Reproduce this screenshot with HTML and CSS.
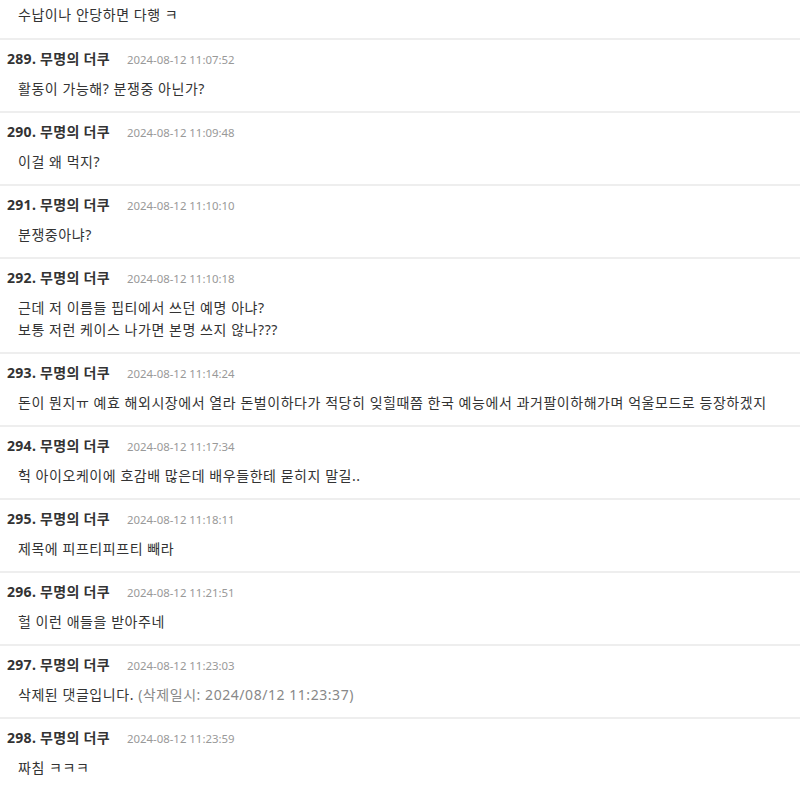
FILE: index.html
```html
<!DOCTYPE html>
<html lang="ko">
<head>
<meta charset="utf-8">
<link rel="stylesheet" href="styles.css">
</head>
<body>
<ul class="comments">
  <li class="comment first">
    <div class="body">수납이나 안당하면 다행 ㅋ</div>
  </li>
  <li class="comment">
    <div class="head"><span class="who">289. 무명의 더쿠</span><span class="date">2024-08-12 11:07:52</span></div>
    <div class="body">활동이 가능해? 분쟁중 아닌가?</div>
  </li>
  <li class="comment">
    <div class="head"><span class="who">290. 무명의 더쿠</span><span class="date">2024-08-12 11:09:48</span></div>
    <div class="body">이걸 왜 먹지?</div>
  </li>
  <li class="comment">
    <div class="head"><span class="who">291. 무명의 더쿠</span><span class="date">2024-08-12 11:10:10</span></div>
    <div class="body">분쟁중아냐?</div>
  </li>
  <li class="comment">
    <div class="head"><span class="who">292. 무명의 더쿠</span><span class="date">2024-08-12 11:10:18</span></div>
    <div class="body">근데 저 이름들 핍티에서 쓰던 예명 아냐?<br>보통 저런 케이스 나가면 본명 쓰지 않나???</div>
  </li>
  <li class="comment">
    <div class="head"><span class="who">293. 무명의 더쿠</span><span class="date">2024-08-12 11:14:24</span></div>
    <div class="body">돈이 뭔지ㅠ 예효 해외시장에서 열라 돈벌이하다가 적당히 잊힐때쯤 한국 예능에서 과거팔이하해가며 억울모드로 등장하겠지</div>
  </li>
  <li class="comment">
    <div class="head"><span class="who">294. 무명의 더쿠</span><span class="date">2024-08-12 11:17:34</span></div>
    <div class="body">헉 아이오케이에 호감배 많은데 배우들한테 묻히지 말길..</div>
  </li>
  <li class="comment">
    <div class="head"><span class="who">295. 무명의 더쿠</span><span class="date">2024-08-12 11:18:11</span></div>
    <div class="body">제목에 피프티피프티 빼라</div>
  </li>
  <li class="comment">
    <div class="head"><span class="who">296. 무명의 더쿠</span><span class="date">2024-08-12 11:21:51</span></div>
    <div class="body">헐 이런 애들을 받아주네</div>
  </li>
  <li class="comment">
    <div class="head"><span class="who">297. 무명의 더쿠</span><span class="date">2024-08-12 11:23:03</span></div>
    <div class="body">삭제된 댓글입니다. <span class="deleted">(삭제일시: 2024/08/12 11:23:37)</span></div>
  </li>
  <li class="comment">
    <div class="head"><span class="who">298. 무명의 더쿠</span><span class="date">2024-08-12 11:23:59</span></div>
    <div class="body">짜침 ㅋㅋㅋ</div>
  </li>
</ul>
</body>
</html>
```

FILE: styles.css
```css
html, body {
  margin: 0;
  padding: 0;
  background: #fff;
}
body {
  font-family: "Noto Sans", "Noto Sans CJK KR", sans-serif;
  color: #333;
}
.comments {
  list-style: none;
  margin: 0;
  padding: 0;
}
.comment {
  border-bottom: 2px solid #eeeeee;
  padding: 11px 0 11px 0;
}
.comment.first {
  padding-top: 4px;
  padding-bottom: 12px;
}
.head {
  display: flex;
  align-items: baseline;
  gap: 17px;
  padding-left: 7px;
  height: 16px;
  line-height: 16px;
  margin-bottom: 11px;
}
.who {
  font-size: 14px;
  font-weight: bold;
  letter-spacing: 0.3px;
  color: #333;
}
.date {
  font-size: 11.4px;
  color: #999;
}
.body {
  padding-left: 18px;
  font-size: 14px;
  line-height: 22px;
  letter-spacing: 0.55px;
  color: #333;
}
.deleted {
  color: #888;
}
```
